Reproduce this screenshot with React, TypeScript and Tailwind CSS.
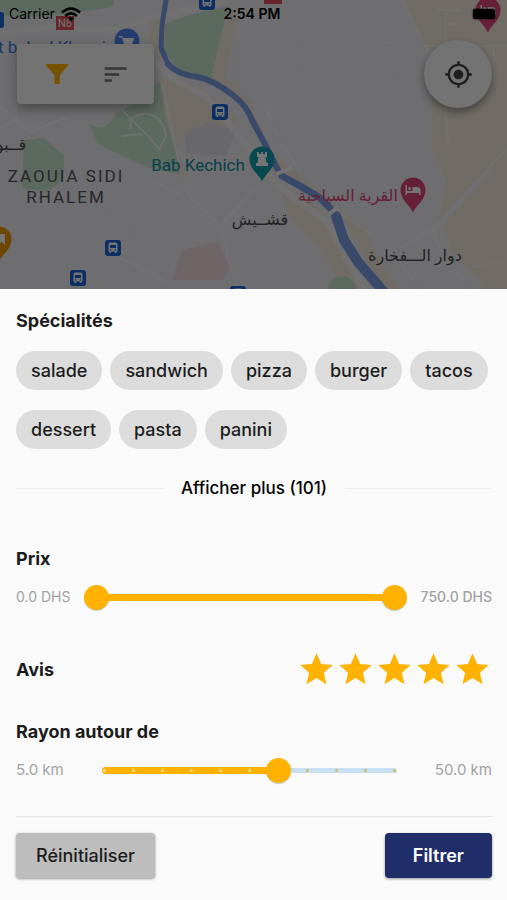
import { useState } from 'react';
import { MdMyLocation, MdSort, MdStar } from 'react-icons/md';
import { clsx } from 'clsx';

const SPECIALITIES = ['salade', 'sandwich', 'pizza', 'burger', 'tacos', 'dessert', 'pasta', 'panini'];

const PRICE_MAX = 750;
const RADIUS_MIN = 5;
const RADIUS_MAX = 50;
const RADIUS_DIVISIONS = 10;
const RADIUS_DEFAULT = 32;

const THUMB =
  'appearance-none bg-transparent [&::-webkit-slider-thumb]:pointer-events-auto [&::-webkit-slider-thumb]:size-[25px] [&::-webkit-slider-thumb]:cursor-pointer [&::-webkit-slider-thumb]:appearance-none [&::-webkit-slider-thumb]:rounded-full [&::-webkit-slider-thumb]:bg-[#ffb300] [&::-webkit-slider-thumb]:shadow-[0_1px_1px_rgba(0,0,0,0.2)]';

function BusStop({ x, y }: { x: number; y: number }) {
  return (
    <g transform={`translate(${x} ${y})`}>
      <rect x="-8" y="-8" width="16" height="16" rx="3" fill="#1a66d6" />
      <path
        d="M-4.5 -3.5Q-4.500 -5.500 -2.500 -5.500H2.500Q4.500 -5.500 4.500 -3.500V3.500H3.500V5H1.800V3.500H-1.800V5H-3.500V3.500H-4.500ZM-3 -3V0H3V-3ZM-3 1.200V2.500H-1.700V1.200ZM1.700 1.200V2.500H3V1.200Z"
        fill="#fff"
        fillRule="evenodd"
      />
    </g>
  );
}

function Pin({ x, y, color, children }: { x: number; y: number; color: string; children?: React.ReactNode }) {
  return (
    <g transform={`translate(${x} ${y})`}>
      <path d="M0 23C-1.500 16 -12.500 11 -12.500 0A12.500 12.500 0 0 1 12.500 0C12.500 11 1.500 16 0 23Z" fill={color} />
      {children}
    </g>
  );
}

const BED = 'M-7.500 -5H-6V1H-0.500V-3H4Q7.500 -3 7.500 0V5H6V3H-6V5H-7.500ZM-5 -1.500A1.600 1.600 0 1 1 -1.800 -1.500A1.600 1.600 0 1 1 -5 -1.500Z';

function MapCanvas() {
  return (
    <svg
      className="absolute inset-0 size-full"
      viewBox="0 0 507 290"
      preserveAspectRatio="xMidYMin slice"
      role="img"
      aria-label="Carte"
    >
      <rect width="507" height="290" fill="#efeef2" />

      {/* sand */}
      <g fill="#f5ecdc">
        <path d="M403 0H507V160L466 190L438 222L446 180L432 150V60Z" />
        <path d="M230 8L238 12L226 78L252 103L268 148L310 184L362 226L398 290H384L340 214L270 170L250 112L208 80Z" />
        <path d="M160 78L200 88L240 118L228 128L198 124L176 148L190 178L178 176L166 120Z" />
        <path d="M150 18L164 20L158 60L150 44Z" />
        <path d="M278 186L318 208L338 250L362 290H344L318 246L292 220Z" />
        <path d="M507 158V290H486L452 250L442 226L480 186Z" />
      </g>

      {/* parks */}
      <g fill="#c9e5cf">
        <path d="M0 0H113Q117 5 108 8L62 14L20 18L0 14Z" />
        <path d="M165 24L192 14L230 6L222 30L211 79L180 72L164 52Z" />
        <path d="M88 122Q102 134 112 120Q116 110 132 106L154 86L160 80L166 120L182 174L150 168L118 154L98 144Z" />
        <path d="M24 140L44 138L64 156V178L48 192L22 188Z" />
        <circle cx="342" cy="290" r="14" />
      </g>
      <path d="M182 250L218 242L230 268L224 280L172 280Z" fill="#f0dcde" />
      <path d="M184 132L210 122L236 130L226 156L186 154Z" fill="#e3e2ea" />

      {/* roads */}
      <g fill="none" stroke="#fafafc" strokeLinejoin="round" strokeLinecap="round">
        <path
          strokeWidth="6"
          strokeOpacity="0.7"
          d="M0 34L50 27L115 30L150 18L230 0M158 64L168 76L208 98L240 138L278 186L328 222L346 258L364 290"
        />
        <path
          strokeWidth="2"
          strokeOpacity="0.75"
          d="M122 110L148 136L160 150M122 136L142 134M130 128Q130 112 148 114Q164 118 166 136L160 148M162 84L172 130L182 178M0 106L30 132L70 116M14 60L16 120L0 128M120 258L150 272L170 284M182 182L190 196L220 226L228 256L238 290M220 226L254 190M182 196L150 180"
        />
        <path
          strokeWidth="2"
          strokeOpacity="0.6"
          d="M403 0L430 56M446 10V42M446 24H458M424 46H507M446 112L448 146M494 48V80M438 10H460M507 148L458 204L432 230L444 256L470 290M432 230L400 248M338 212L374 236L400 262L420 290M264 104L280 140L300 172"
        />
        <g strokeWidth="1" strokeOpacity="0.55">
          <path d="M254 98L306 92L380 76L424 66M254 66L300 52L350 46L420 40M276 118L340 98L420 84M296 40L306 104M330 0L314 30L296 42M350 0L364 60L380 96M374 0L384 50L398 90M392 0L404 46L420 70M262 20L276 60L300 88M360 20H402M362 34L410 30M366 50L414 44M254 30L290 8" />
          <path d="M232 28H254M230 44H252M228 60H254M236 18V90M246 14V96" />
          <path d="M60 210L100 200L160 190M66 226L110 222L158 214M70 244L120 238L158 232M84 202L92 260M106 200L112 244M128 196L134 250M150 190L156 246M40 206L44 240L30 270M0 230L40 224M44 240L64 286M96 272H122L118 290" />
          <path d="M402 262L440 250M412 274L452 262M424 286L470 272M430 240L448 290M416 250L432 290M456 270L500 262M250 234L264 224L282 244L270 256Z" />
          <path d="M40 110L60 140M50 116L90 140M20 130L50 150" />
        </g>
      </g>

      {/* river */}
      <g fill="none" stroke="#7c9fe8" strokeLinecap="round" strokeLinejoin="round">
        <path strokeWidth="5" d="M166 0L162 25L161 48L168 64" />
        <path strokeWidth="6" d="M168 64Q178 75 198 77Q214 80 234 96Q247 106 252 120L266 146L278 170" />
        <path strokeWidth="7" d="M282 176L302 187L320 198L330 208" />
        <path strokeWidth="10" d="M336 216L344 240L358 262L384 292" />
      </g>
      <path d="M328 215L338 207M276 174L292 168" stroke="#fbfbfd" strokeWidth="4" />

      {/* markers */}
      <BusStop x={220} y={112} />
      <BusStop x={113} y={248} />
      <BusStop x={78} y={278} />
      <BusStop x={207} y={2} />
      <BusStop x={238} y={294} />
      <rect x="-12" y="12" width="16" height="16" rx="3" fill="#1a66d6" />
      <rect x="264" y="-10" width="18" height="14" fill="#e0525c" />
      <rect x="56" y="16" width="18" height="14" fill="#e0525c" />
      <text x="65" y="27" textAnchor="middle" fill="#fff" className="font-['Roboto',sans-serif] text-[11px]">
        N8
      </text>
      <g transform="translate(127 41)">
        <circle r="12.500" fill="#4b86ee" />
        <path d="M-8 -5H-5L-4 -3H7L5 3H-3L-5 -3.500H-8Z" fill="#fff" />
      </g>
      <Pin x={262} y={159} color="#129eaf">
        <path d="M-5 -7H-3V-5H-1V-7H1V-5H3V-7H5V-2H3.500L4.500 4H6V7H-6V4H-4.500L-3.500 -2H-5Z" fill="#fff" />
      </Pin>
      <Pin x={413} y={190} color="#e0457b">
        <path d={BED} fill="#fff" />
      </Pin>
      <Pin x={488} y={10} color="#e0457b">
        <path d={BED} fill="#fff" />
      </Pin>
      <Pin x={-1} y={239} color="#f29900">
        <path d="M1 -5H6V6L3 3L1 4Z" fill="#fff" />
      </Pin>

      {/* place names */}
      <g className="font-['Roboto','DejaVu_Sans',sans-serif]">
        <text x="-2" y="53" fill="#3f7be6" className="text-[17px]">
          t bab el Khemis
        </text>
        <text x="198" y="171" textAnchor="middle" fill="#12909f" className="text-[17px]">
          Bab Kechich
        </text>
        <g fill="#55565b" className="text-[17px] tracking-[2px]">
          <text x="66" y="182" textAnchor="middle">
            ZAOUIA SIDI
          </text>
          <text x="66" y="203" textAnchor="middle">
            RHALEM
          </text>
        </g>
        <text x="348" y="201" textAnchor="middle" fill="#e0457b" className="text-[16px]">
          القرية السياحية
        </text>
        <g fill="#4a4b50" className="text-[16px]">
          <text x="260" y="225" textAnchor="middle">
            قشــيش
          </text>
          <text x="415" y="261" textAnchor="middle">
            دوار الـــفخارة
          </text>
          <text x="11" y="150" textAnchor="middle">
            قــبو
          </text>
        </g>
      </g>
    </svg>
  );
}

function StatusBar() {
  return (
    <div className="grid h-7 grid-cols-3 items-center pr-3 pl-[9px] text-sm text-black">
      <div className="flex items-center gap-[6px]">
        <span>Carrier</span>
        <svg className="h-[15px] w-5" viewBox="0 0 20 15" fill="none" stroke="currentColor" strokeWidth="2.600" aria-hidden="true">
          <path d="M1 5.500Q10 -2.500 19 5.500M4.200 9Q10 3.800 15.800 9" />
          <path d="M10 14.500L6.800 11.300Q10 8.600 13.200 11.300Z" fill="currentColor" stroke="none" />
        </svg>
      </div>
      <span className="text-center text-sm font-semibold">2:54 PM</span>
      <span className="h-[10px] w-[22px] justify-self-end rounded-xs bg-black shadow-[0_0_2px_black]" />
    </div>
  );
}

function MapHeader() {
  return (
    <header className="relative min-h-72 flex-1 overflow-hidden">
      <MapCanvas />
      <div className="relative flex items-start justify-between pt-10 pr-[15px] pl-[17px]">
        <div className="mt-1 flex h-[60px] w-[137px] items-center justify-around rounded bg-[#fafafa] pr-3 pl-2 shadow-[0_5px_12px_rgba(0,0,0,0.35)]">
          <button type="button" aria-label="Filtres" className="p-2">
            <svg className="size-6" viewBox="0 0 24 24" fill="#ffb300" aria-hidden="true">
              <path d="M1 2H23V3.500L14.800 13V21Q14.800 22 13.800 22H10.500Q9.500 22 9.500 21V13L1 3.500Z" />
            </svg>
          </button>
          <button type="button" aria-label="Trier" className="text-[#757575]">
            <MdSort className="size-[29px]" />
          </button>
        </div>
        <button
          type="button"
          aria-label="Ma position"
          className="flex size-[68px] items-center justify-center rounded-full bg-[#fafafa] text-[#424242] shadow-[0_4px_8px_rgba(0,0,0,0.4)]"
        >
          <MdMyLocation className="size-[29px]" />
        </button>
      </div>
      <div className="absolute inset-0 bg-black/54" />
      <div className="absolute inset-x-0 top-0">
        <StatusBar />
      </div>
    </header>
  );
}

function PriceSlider({ low, high, onLow, onHigh }: {
  low: number;
  high: number;
  onLow: (v: number) => void;
  onHigh: (v: number) => void;
}) {
  return (
    <div className="flex h-8 items-center gap-3 text-sm text-[#a3a3a3]">
      <span className="w-14 whitespace-nowrap">{low.toFixed(1)} DHS</span>
      <div className="relative h-[25px] flex-1">
        <div className="absolute inset-x-3 top-[9px] h-[7px] rounded-full bg-[#c8e0f4]">
          <div
            className="absolute inset-y-0 rounded-full bg-[#ffb300]"
            style={{ left: `${(low / PRICE_MAX) * 100}%`, right: `${100 - (high / PRICE_MAX) * 100}%` }}
          />
        </div>
        <input
          type="range"
          aria-label="Prix minimum"
          min={0}
          max={PRICE_MAX}
          value={low}
          onChange={(e) => onLow(Math.min(Number(e.target.value), high))}
          className={clsx(THUMB, 'pointer-events-none absolute inset-0 size-full')}
        />
        <input
          type="range"
          aria-label="Prix maximum"
          min={0}
          max={PRICE_MAX}
          value={high}
          onChange={(e) => onHigh(Math.max(Number(e.target.value), low))}
          className={clsx(THUMB, 'pointer-events-none absolute inset-0 size-full')}
        />
      </div>
      <span className="w-[73px] text-right font-medium whitespace-nowrap">{high.toFixed(1)} DHS</span>
    </div>
  );
}

function RadiusSlider({ value, onChange }: { value: number; onChange: (v: number) => void }) {
  const ratio = (value - RADIUS_MIN) / (RADIUS_MAX - RADIUS_MIN);
  return (
    <div className="flex h-8 items-center gap-3 text-[15px] text-[#a3a3a3]">
      <span className="w-16 whitespace-nowrap">5.0 km</span>
      <div className="relative h-[25px] flex-1">
        <div className="absolute inset-x-[10px] top-[10px] h-[5px] rounded-full bg-[#c8e0f4]" />
        <div className="absolute inset-x-[10px] top-[9px] h-[7px]">
          <div className="h-full rounded-full bg-[#ffb300]" style={{ width: `${ratio * 100}%` }} />
        </div>
        <div className="absolute inset-x-[11px] top-[11px] flex justify-between">
          {Array.from({ length: RADIUS_DIVISIONS + 1 }, (_, i) => (
            <span
              key={i}
              className={clsx('size-[3px] rounded-full', i / RADIUS_DIVISIONS <= ratio ? 'bg-[#ffe3a0]' : 'bg-[#d9b95c]')}
            />
          ))}
        </div>
        <input
          id="radius"
          type="range"
          min={RADIUS_MIN}
          max={RADIUS_MAX}
          step={(RADIUS_MAX - RADIUS_MIN) / RADIUS_DIVISIONS}
          value={value}
          onChange={(e) => onChange(Number(e.target.value))}
          className={clsx(THUMB, 'absolute inset-0 size-full')}
        />
      </div>
      <span className="w-[73px] text-right whitespace-nowrap">50.0 km</span>
    </div>
  );
}

export default function App() {
  const [selected, setSelected] = useState<string[]>([]);
  const [low, setLow] = useState(0);
  const [high, setHigh] = useState(PRICE_MAX);
  const [rating, setRating] = useState(5);
  const [radius, setRadius] = useState(RADIUS_DEFAULT);

  const toggle = (name: string) =>
    setSelected((prev) => (prev.includes(name) ? prev.filter((n) => n !== name) : [...prev, name]));

  const reset = () => {
    setSelected([]);
    setLow(0);
    setHigh(PRICE_MAX);
    setRating(5);
    setRadius(RADIUS_DEFAULT);
  };

  return (
    <div className="flex min-h-screen flex-col bg-[#fafafa] font-['Inter','DejaVu_Sans',sans-serif] text-[18px] leading-6 text-[#1c1c1c]">
      <MapHeader />

      <main className="pt-5 pr-[15px] pb-[22px] pl-4">
        <h2 className="font-bold">Spécialités</h2>
        <div className="mt-[18px] flex flex-wrap gap-x-2 gap-y-5">
          {SPECIALITIES.map((name) => (
            <button
              key={name}
              type="button"
              aria-pressed={selected.includes(name)}
              onClick={() => toggle(name)}
              className={clsx(
                'h-[39px] rounded-full px-[15px] font-medium',
                selected.includes(name) ? 'bg-[#ffb300]' : 'bg-[#dcdcdc]',
              )}
            >
              {name}
            </button>
          ))}
        </div>

        <div className="mt-[27px] flex items-center gap-[18px]">
          <hr className="flex-1 border-[#ececec]" />
          <button type="button" className="text-[17px] font-medium text-black">
            Afficher plus (101)
          </button>
          <hr className="flex-1 border-[#ececec]" />
        </div>

        <h2 className="mt-[47px] font-bold">Prix</h2>
        <div className="mt-[10px]">
          <PriceSlider low={low} high={high} onLow={setLow} onHigh={setHigh} />
        </div>

        <div className="mt-[37px] flex items-center justify-between">
          <h2 className="font-bold">Avis</h2>
          <div className="flex text-[#ffb300]">
            {[1, 2, 3, 4, 5].map((n) => (
              <button key={n} type="button" aria-label={`${n} étoiles`} onClick={() => setRating(n)}>
                <MdStar className={clsx('size-[39px]', n > rating && 'opacity-30')} />
              </button>
            ))}
          </div>
        </div>

        <label htmlFor="radius" className="mt-[31px] block font-bold">
          Rayon autour de
        </label>
        <div className="mt-[10px]">
          <RadiusSlider value={radius} onChange={setRadius} />
        </div>

        <hr className="mt-[30px] border-[#e4e4e4]" />
        <div className="mt-4 flex justify-between">
          <button
            type="button"
            onClick={reset}
            className="h-[45px] rounded-sm bg-[#bdbdbd] px-5 font-medium shadow-[0_1px_3px_rgba(0,0,0,0.4)]"
          >
            Réinitialiser
          </button>
          <button
            type="button"
            className="h-[45px] rounded-sm bg-[#1f2d68] px-7 font-semibold text-white shadow-[0_1px_3px_rgba(0,0,0,0.4)]"
          >
            Filtrer
          </button>
        </div>
      </main>
    </div>
  );
}
